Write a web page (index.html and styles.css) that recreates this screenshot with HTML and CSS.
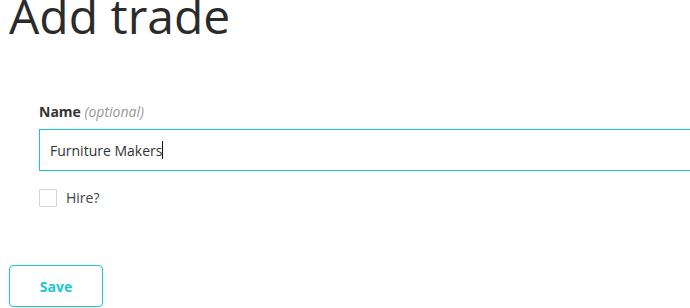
FILE: index.html
```html
<!DOCTYPE html>
<html lang="en">
<head>
<meta charset="utf-8">
<title>Add trade</title>
<link rel="stylesheet" href="styles.css">
</head>
<body>
<main class="page">
  <h1 class="title">Add trade</h1>
  <form class="form">
    <div class="fields">
      <label class="label" for="name">Name <span class="optional">(optional)</span></label>
      <div class="input-wrap">
        <input class="input" id="name" type="text" value="Furniture Makers">
        <span class="caret"></span>
      </div>
      <label class="check">
        <span class="box"></span>
        <span class="check-text">Hire?</span>
      </label>
    </div>
    <button class="btn" type="button">Save</button>
  </form>
</main>
</body>
</html>
```

FILE: styles.css
```css
html, body {
  margin: 0;
  padding: 0;
  overflow: hidden;
  background: #fff;
}
body {
  font-family: "Open Sans", "DejaVu Sans", sans-serif;
  color: #333;
}
.page {
  padding-left: 9px;
}
.title {
  margin: -8px 0 0 0;
  font-size: 48px;
  line-height: 48px;
  font-weight: 400;
  color: #2b2b2b;
}
.form {
  display: flex;
  flex-direction: column;
  align-items: flex-start;
}
.fields {
  display: flex;
  flex-direction: column;
  align-items: flex-start;
  padding-left: 30px;
  margin-top: 62px;
}
.label {
  font-size: 14px;
  line-height: 20px;
  font-weight: 700;
  color: #333;
}
.optional {
  font-weight: 400;
  font-style: italic;
  color: #999;
}
.input-wrap {
  position: relative;
  margin-top: 7px;
}
.input {
  display: block;
  box-sizing: border-box;
  width: 700px;
  height: 42px;
  padding: 0 10px;
  border: 1px solid #1cc6cf;
  border-radius: 0;
  outline: none;
  font-family: inherit;
  font-size: 14px;
  color: #333;
}
.caret {
  position: absolute;
  left: 123px;
  top: 12px;
  width: 1px;
  height: 18px;
  background: #111;
}
.check {
  display: flex;
  align-items: center;
  margin-top: 17px;
  gap: 9px;
  font-size: 14px;
  color: #444;
}
.box {
  box-sizing: border-box;
  width: 18px;
  height: 18px;
  border: 1px solid #d4d4d4;
  border-radius: 1px;
  background: #fff;
}
.btn {
  box-sizing: border-box;
  margin-top: 58px;
  width: 94px;
  height: 42px;
  border: 1px solid #1cc6cf;
  border-radius: 4px;
  background: #fff;
  color: #1cc6cf;
  font-family: inherit;
  font-size: 14px;
  font-weight: 700;
  cursor: pointer;
}
```
